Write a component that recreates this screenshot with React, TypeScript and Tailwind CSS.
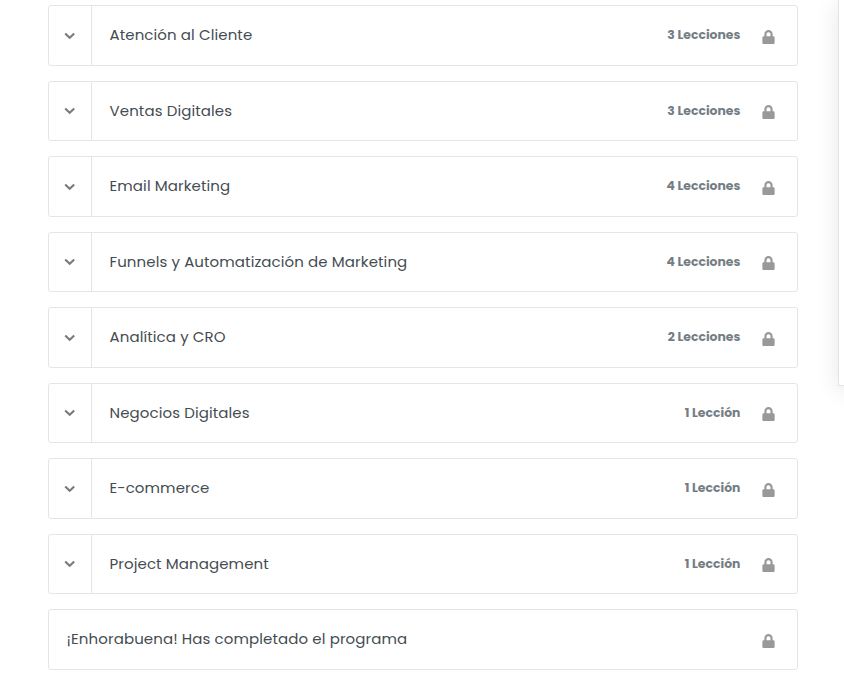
import React from "react";
import { FaLock } from "react-icons/fa";

type Section = {
  title: string;
  lessons?: string;
};

const sections: Section[] = [
  { title: "Atención al Cliente", lessons: "3 Lecciones" },
  { title: "Ventas Digitales", lessons: "3 Lecciones" },
  { title: "Email Marketing", lessons: "4 Lecciones" },
  { title: "Funnels y Automatización de Marketing", lessons: "4 Lecciones" },
  { title: "Analítica y CRO", lessons: "2 Lecciones" },
  { title: "Negocios Digitales", lessons: "1 Lección" },
  { title: "E-commerce", lessons: "1 Lección" },
  { title: "Project Management", lessons: "1 Lección" },
  { title: "¡Enhorabuena! Has completado el programa" },
];

function SectionRow({ section }: { section: Section }) {
  return (
    <li className="flex h-[60.5px] rounded-[3px] border border-[#e2e5ea] bg-white">
      {section.lessons && (
        <button aria-label="Expandir" className="flex w-[43px] shrink-0 items-center justify-center border-r border-[#e2e5ea] pr-px">
          <svg viewBox="0 0 12 8" className="h-2 w-3 text-[#777b80]" fill="none" stroke="currentColor" strokeWidth="2.1">
            <path d="M1.2 1.5 L5.7 5.7 L10.2 1.5" />
          </svg>
        </button>
      )}
      <div className="flex flex-1 items-center pr-[22px] pl-[17.5px]">
        <span className="flex-1 pb-[0.75px] text-[15px] leading-6 tracking-[0.1px] whitespace-nowrap text-[#444c52]">
          {section.title}
        </span>
        {section.lessons && (
          <span className="mr-[21.6px] pb-[0.75px] text-[12.4px] leading-6 font-bold whitespace-nowrap text-[#757d84]">
            {section.lessons}
          </span>
        )}
        <FaLock className="mt-[2.5px] h-[14px] w-[13px] text-[#999999]" />
      </div>
    </li>
  );
}

export default function App() {
  return (
    <div className="flex h-[681px] w-[844px] items-start overflow-hidden bg-white font-['Poppins','Inter',sans-serif]">
      <ul className="ml-12 flex w-[750px] shrink-0 flex-col gap-[15px] pt-[5.25px]">
        {sections.map((section) => (
          <SectionRow key={section.title} section={section} />
        ))}
      </ul>

      {/* Left edge of the course sidebar card */}
      <aside className="ml-10 h-[386px] w-[320px] shrink-0 border border-t-0 border-[#e0e6ed] bg-white shadow-[0_4px_22px_rgba(0,0,0,0.1)]" />
    </div>
  );
}
